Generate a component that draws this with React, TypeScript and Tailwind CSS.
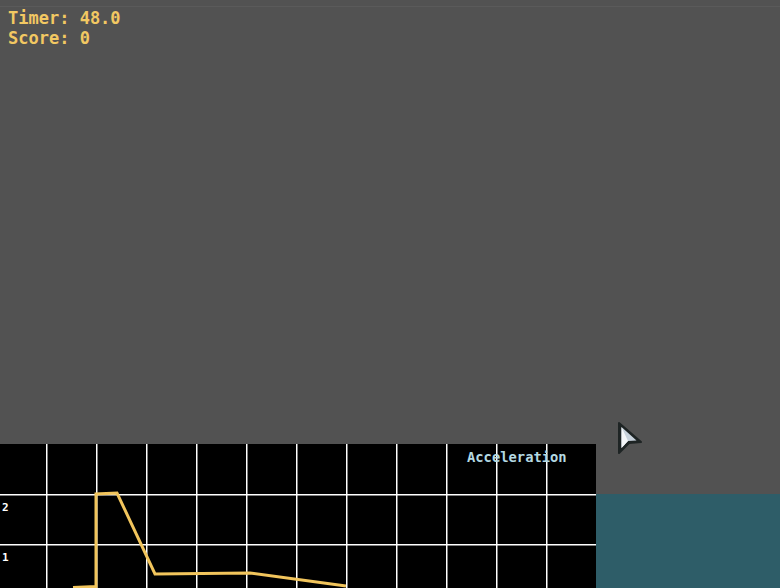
import React from "react";

const pts: [number, number][] = [
  [73, 143.5],
  [96, 142.5],
  [96, 50],
  [117, 49],
  [155, 130],
  [250, 129],
  [346, 142],
];

function Chart() {
  const vx = [46, 96, 146, 196, 246, 296, 346, 396, 446, 496, 546];
  return (
    <div className="relative w-[596px] h-[144px] bg-black shrink-0">
      <svg width="596" height="144" className="absolute inset-0 block">
        {vx.map((x) => (
          <rect key={x} x={x} y={0} width={1.5} height={144} fill="#ffffff" />
        ))}
        <rect x={0} y={50} width={596} height={1.5} fill="#ffffff" />
        <rect x={0} y={100} width={596} height={1.5} fill="#ffffff" />
        <polyline
          points={pts.map((p) => p.join(",")).join(" ")}
          fill="none"
          stroke="#f2c55c"
          strokeWidth={3}
          strokeLinejoin="miter"
        />
      </svg>
      <div className="absolute left-[2px] top-[58px] text-[11px] leading-[12px] font-bold text-white font-['DejaVu_Sans_Mono',monospace]">2</div>
      <div className="absolute left-[2px] top-[108px] text-[11px] leading-[12px] font-bold text-white font-['DejaVu_Sans_Mono',monospace]">1</div>
      <div className="absolute left-[467px] top-[5px] text-[13.8px] leading-[16px] font-bold text-[#b4d9e2] font-['DejaVu_Sans_Mono',monospace]">
        Acceleration
      </div>
    </div>
  );
}

export default function App() {
  return (
    <div className="relative w-[780px] h-[588px] bg-[#525252] flex flex-col overflow-hidden">
      <div className="h-[7px] border-b border-[#5a5a5a] shrink-0" />
      <div className="flex-1 px-[8px] pt-[1px] font-['DejaVu_Sans_Mono',monospace] font-bold text-[17px] leading-[20px] text-[#f2c862]">
        <div>Timer: 48.0</div>
        <div>Score: 0</div>
      </div>
      <div className="flex h-[144px] shrink-0">
        <Chart />
        <div className="flex-1 flex flex-col">
          <div className="h-[50px]" />
          <div className="flex-1 bg-[#2e5d68]" />
        </div>
      </div>
      <svg width="26" height="34" className="absolute left-[617px] top-[421px]" viewBox="0 0 26 34">
        <polygon points="2,2 24,21 12,22 2,32" fill="#1e2424" stroke="#1e2424" strokeWidth="2" strokeLinejoin="round" />
        <polygon points="4.5,6 19.5,19.5 11,20 4.5,27" fill="#c8d2dc" />
        <polygon points="4.5,6 11,20 4.5,27" fill="#f4f6f8" />
      </svg>
    </div>
  );
}
